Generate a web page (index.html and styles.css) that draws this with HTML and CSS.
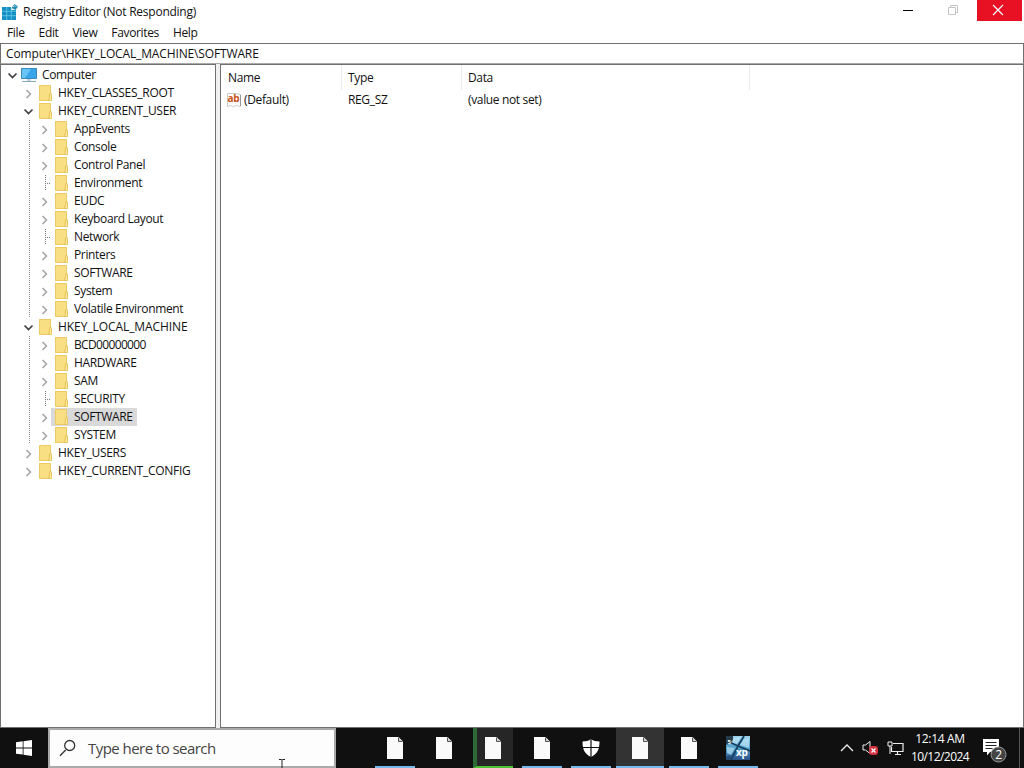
FILE: index.html
```html
<!DOCTYPE html>
<html lang="en">
<head>
    <meta charset="UTF-8">
    <meta name="viewport" content="width=device-width, initial-scale=1.0">
    <title>Registry Editor</title>
    <link rel="stylesheet" href="styles.css">
</head>
<body>
    <!-- shared icons -->
    <svg class="sprite">
        <symbol id="closed" viewBox="0 0 12 12"><path d="M4.500 2l4 4-4 4" fill="none" stroke="#a3a3a3" stroke-width="1.5"/></symbol>
        <symbol id="open" viewBox="0 0 12 12"><path d="M2.500 3.500l4 4 4-4" fill="none" stroke="#404040" stroke-width="1.7"/></symbol>
        <symbol id="branch" viewBox="0 0 12 18"><path d="M7.500 1v16M9 9.500h5" fill="none" stroke="#777" stroke-dasharray="1 1"/></symbol>
        <symbol id="folder" viewBox="0 0 14 16">
            <path d="M1 0h12v8l1 1v6.500H1z" fill="#fae08a"/>
            <path d="M1.500.5h11v7.500l-1.500 7.500H1.500z" fill="#f9df83" stroke="#eccb62"/>
            <path d="M12 8l-1.200 7.500h2.700V9z" fill="#ffeaa0" stroke="#e2bd50" stroke-width=".8"/>
        </symbol>
        <symbol id="file" viewBox="0 0 18 22">
            <path d="M1 0h11.500L17 4.500V22H1z" fill="#fafafa"/>
            <path d="M12.500.5v4h4" fill="#ccc" stroke="#555" stroke-width="1"/>
        </symbol>
    </svg>

    <div class="window">
        <div class="titlebar">
            <svg class="app-icon" viewBox="0 0 16 16">
                <path d="M0 3h9v3h5v10H0z" fill="#168fc2"/>
                <path d="M0 7.300h14M0 11.700h14M4.700 3v13M9.300 4v12" stroke="#6fd2ee" stroke-width=".7"/>
                <path d="M12.500 0l3.500 2.500-2.500 3.500-4-2z" fill="#2386ad"/>
                <path d="M11 3l2-1.500 1.500 1.500" fill="none" stroke="#8fd6e8"/>
            </svg>
            <span class="title">Registry Editor (Not Responding)</span>
            <div class="controls">
                <div class="control"><svg width="12" height="12"><path d="M1 6.500h10" stroke="#000"/></svg></div>
                <div class="control"><svg width="12" height="12"><path d="M1.500 3.500h7v7h-7zM3.500 3V1.500h7v7H9" fill="none" stroke="#c4c4c4"/></svg></div>
                <div class="control close"><svg width="12" height="12"><path d="M1 1l10 10M11 1L1 11" stroke="#fff" stroke-width="1.200"/></svg></div>
            </div>
        </div>
        <div class="menubar">
            <span>File</span><span>Edit</span><span>View</span><span>Favorites</span><span>Help</span>
        </div>
        <div class="address">Computer\HKEY_LOCAL_MACHINE\SOFTWARE</div>

        <div class="panes">
            <div class="tree">
                <div class="row root">
                    <svg class="toggle"><use href="#open"/></svg>
                    <svg class="computer" viewBox="0 0 16 16">
                        <path d="M.5 1.500h15v10H.5z" fill="#38a5e8" stroke="#3989bd"/>
                        <path d="M1 2h9L4 11H1z" fill="#69c5f5"/>
                        <path d="M6 12h4v2H6z" fill="#c5d4df"/>
                        <path d="M1 14.500h14" stroke="#86a8bf"/>
                    </svg>
                    <span>Computer</span>
                </div>
                <ul>
                    <li><div class="row hive"><svg class="toggle"><use href="#closed"/></svg><svg class="folder"><use href="#folder"/></svg><span>HKEY_CLASSES_ROOT</span></div></li>
                    <li>
                        <div class="row hive"><svg class="toggle"><use href="#open"/></svg><svg class="folder"><use href="#folder"/></svg><span>HKEY_CURRENT_USER</span></div>
                        <ul class="keys">
                            <li class="row"><svg class="toggle"><use href="#closed"/></svg><svg class="folder"><use href="#folder"/></svg><span>AppEvents</span></li>
                            <li class="row"><svg class="toggle"><use href="#closed"/></svg><svg class="folder"><use href="#folder"/></svg><span>Console</span></li>
                            <li class="row"><svg class="toggle"><use href="#closed"/></svg><svg class="folder"><use href="#folder"/></svg><span>Control Panel</span></li>
                            <li class="row"><svg class="leaf"><use href="#branch"/></svg><svg class="folder"><use href="#folder"/></svg><span>Environment</span></li>
                            <li class="row"><svg class="toggle"><use href="#closed"/></svg><svg class="folder"><use href="#folder"/></svg><span>EUDC</span></li>
                            <li class="row"><svg class="toggle"><use href="#closed"/></svg><svg class="folder"><use href="#folder"/></svg><span>Keyboard Layout</span></li>
                            <li class="row"><svg class="leaf"><use href="#branch"/></svg><svg class="folder"><use href="#folder"/></svg><span>Network</span></li>
                            <li class="row"><svg class="toggle"><use href="#closed"/></svg><svg class="folder"><use href="#folder"/></svg><span>Printers</span></li>
                            <li class="row"><svg class="toggle"><use href="#closed"/></svg><svg class="folder"><use href="#folder"/></svg><span>SOFTWARE</span></li>
                            <li class="row"><svg class="toggle"><use href="#closed"/></svg><svg class="folder"><use href="#folder"/></svg><span>System</span></li>
                            <li class="row"><svg class="toggle"><use href="#closed"/></svg><svg class="folder"><use href="#folder"/></svg><span>Volatile Environment</span></li>
                        </ul>
                    </li>
                    <li>
                        <div class="row hive machine"><svg class="toggle"><use href="#open"/></svg><svg class="folder"><use href="#folder"/></svg><span>HKEY_LOCAL_MACHINE</span></div>
                        <ul class="keys">
                            <li class="row digits"><svg class="toggle"><use href="#closed"/></svg><svg class="folder"><use href="#folder"/></svg><span>BCD00000000</span></li>
                            <li class="row"><svg class="toggle"><use href="#closed"/></svg><svg class="folder"><use href="#folder"/></svg><span>HARDWARE</span></li>
                            <li class="row"><svg class="toggle"><use href="#closed"/></svg><svg class="folder"><use href="#folder"/></svg><span>SAM</span></li>
                            <li class="row"><svg class="leaf"><use href="#branch"/></svg><svg class="folder"><use href="#folder"/></svg><span>SECURITY</span></li>
                            <li class="row selected"><svg class="toggle"><use href="#closed"/></svg><svg class="folder"><use href="#folder"/></svg><span>SOFTWARE</span></li>
                            <li class="row"><svg class="toggle"><use href="#closed"/></svg><svg class="folder"><use href="#folder"/></svg><span>SYSTEM</span></li>
                        </ul>
                    </li>
                    <li><div class="row hive"><svg class="toggle"><use href="#closed"/></svg><svg class="folder"><use href="#folder"/></svg><span>HKEY_USERS</span></div></li>
                    <li><div class="row hive"><svg class="toggle"><use href="#closed"/></svg><svg class="folder"><use href="#folder"/></svg><span>HKEY_CURRENT_CONFIG</span></div></li>
                </ul>
            </div>
            <div class="values">
                <div class="value-row head"><span class="name">Name</span><span>Type</span><span>Data</span></div>
                <div class="value-row">
                    <span class="value">
                        <svg class="string-icon" viewBox="0 0 16 16">
                            <path d="M1.500 1.500h9l4 1v12l-4-1-3 1-3-1-3 1z" fill="#fff" stroke="#c9c9c9"/>
                            <path d="M14.500 3v11" stroke="#999"/>
                            <text x="1.500" y="10">ab</text>
                        </svg>(Default)</span>
                    <span>REG_SZ</span>
                    <span>(value not set)</span>
                </div>
            </div>
        </div>
    </div>

    <div class="taskbar">
        <div class="start">
            <svg width="16" height="16" viewBox="0 0 16 16"><path d="M0 2.300l6.700-1v6.200H0zM7.500 1.200L16 0v7.500H7.500zM0 8.400h6.700v6.200L0 13.700zM7.500 8.400H16V16l-8.500-1.200z" fill="#fff"/></svg>
        </div>
        <div class="search">
            <svg width="18" height="18" viewBox="0 0 18 18"><path d="M6.700 11L1 16.700" stroke="#333" stroke-width="1.400"/><circle cx="10.700" cy="6.500" r="5" fill="none" stroke="#333" stroke-width="1.300"/></svg>
            <span>Type here to search</span>
            <svg class="cursor" width="8" height="10"><path d="M1 1.500h2.500l.5.5.5-.5H7M4 2v8" fill="none" stroke="#222"/></svg>
        </div>
        <div class="tasks">
            <div class="task running"><svg class="file"><use href="#file"/></svg></div>
            <div class="task"><svg class="file"><use href="#file"/></svg></div>
            <div class="task progress"><svg class="file"><use href="#file"/></svg></div>
            <div class="task running"><svg class="file"><use href="#file"/></svg></div>
            <div class="task running">
                <svg width="18" height="18" viewBox="0 0 18 18"><path d="M9 0c2.500 2 5 2.300 8.500 2.500 0 8-2 12-8.500 15.500C2.500 14.500.5 10.500.5 2.500 4 2.300 6.500 2 9 0z" fill="#fff"/><path d="M9 0v18M0 8.500h18" stroke="#101010" stroke-width="1.200"/></svg>
            </div>
            <div class="task running active"><svg class="file"><use href="#file"/></svg></div>
            <div class="task running"><svg class="file"><use href="#file"/></svg></div>
            <div class="task running">
                <svg class="xp-icon" width="24" height="24" viewBox="0 0 24 24">
                    <defs><linearGradient id="xp" x1="0" y1="0" x2="0" y2="1"><stop offset="0" stop-color="#9fd3ec"/><stop offset=".5" stop-color="#4d9fca"/><stop offset="1" stop-color="#2a5088"/></linearGradient></defs>
                    <path d="M0 0h24v24H0z" fill="url(#xp)"/>
                    <path d="M0 0h7v6l-7 3z" fill="#253b48"/>
                    <path d="M1 5l11 5 12 5M18 0l-6 10L5 24" fill="none" stroke="#173f61" stroke-width="1.800"/>
                    <path d="M8 2l7-1-4 7-6-2zM14 9l4-6 5-1v10zM1 11l8 1-4 7-4-2z" fill="#c4eafa" opacity=".65"/>
                    <path d="M0 21l5-2-1 5H0z" fill="#294a70"/>
                    <text class="five" x="1.500" y="7.500">5</text>
                    <text x="10" y="20">xp</text>
                </svg>
            </div>
        </div>
        <div class="tray">
            <svg width="14" height="8"><path d="M1 7l6-6 6 6" fill="none" stroke="#eee" stroke-width="1.300"/></svg>
            <svg class="volume" width="17" height="16" viewBox="0 0 17 16">
                <path d="M1 5h2.500L8 1.500v12L3.500 10H1z" fill="none" stroke="#eee"/>
                <rect x="7" y="6" width="9" height="9" rx="3" fill="#d23340"/>
                <path d="M9.500 8.500l4 4M13.500 8.500l-4 4" stroke="#fff" stroke-width="1.300"/>
            </svg>
            <svg class="network" width="17" height="15" viewBox="0 0 17 15">
                <path d="M6 2.500h10v8H4.500V6M8 13.500h6M10.500 11v2.500" fill="none" stroke="#eee" stroke-width="1.200"/>
                <path d="M1 1h4v4H1zM3 5v8" fill="none" stroke="#eee"/>
            </svg>
            <div class="clock"><span>12:14 AM</span><span class="date">10/12/2024</span></div>
            <svg class="notice" width="25" height="24" viewBox="0 0 25 24">
                <path d="M1 0h16v13H8l-3 3.500V13H1z" fill="#fff"/>
                <path d="M3.500 3.500h11M3.500 6.500h11M3.500 9.500h7" stroke="#222"/>
                <circle cx="16.500" cy="15.500" r="7.500" fill="#444" stroke="#999"/>
                <text x="13.300" y="20">2</text>
            </svg>
            <div class="show-desktop"></div>
        </div>
    </div>
</body>
</html>
```

FILE: styles.css
```css
* {
    box-sizing: border-box;
}
body {
    margin: 0;
    width: 1024px;
    height: 768px;
    overflow: hidden;
    display: flex;
    flex-direction: column;
    font-family: "Open Sans", "Noto Sans", sans-serif;
    font-size: 12px;
    letter-spacing: -0.35px;
    color: #111;
    background: #fff;
}
svg {
    flex: none;
    display: block;
}
.sprite {
    width: 0;
    height: 0;
    position: absolute;
}
.window {
    height: 728px;
    display: flex;
    flex-direction: column;
}

/* title and menu */
.titlebar {
    height: 24px;
    display: flex;
    align-items: center;
    padding-left: 2px;
}
.app-icon {
    width: 16px;
    height: 16px;
    margin-right: 5px;
}
.title {
    letter-spacing: -0.25px;
    line-height: 22px;
    padding-bottom: 1px;
}
.controls {
    display: flex;
    margin-left: auto;
    align-self: flex-start;
    padding-right: 2px;
}
.control {
    width: 45px;
    height: 21px;
    display: flex;
    align-items: center;
    justify-content: center;
    padding: 0 3px 1px 0;
}
.close {
    background: #e81123;
}
.menubar {
    height: 19px;
    display: flex;
    gap: 14px;
    padding-left: 7px;
    line-height: 18px;
}
.address {
    height: 21px;
    border: 1px solid #707070;
    border-bottom-color: #aaa;
    padding-left: 5px;
    line-height: 20px;
    letter-spacing: -0.14px;
}

/* panes */
.panes {
    flex: 1;
    display: flex;
    gap: 4px;
    background: #f0f0f0;
}
.tree, .values {
    background: #fff;
    border: 1px solid #707070;
}
.tree {
    width: 216px;
    padding-top: 1px;
}
.values {
    flex: 1;
}
ul {
    list-style: none;
    margin: 0;
    padding: 0 0 0 16px;
}
.row {
    height: 18px;
    display: flex;
    align-items: center;
    padding-left: 5px;
    white-space: nowrap;
}
.toggle {
    width: 12px;
    height: 12px;
    margin-top: 2px;
}
.leaf {
    width: 12px;
    height: 18px;
    overflow: visible;
}
.folder {
    width: 14px;
    height: 16px;
    margin: 0 2px 0 4px;
}
.row span {
    padding: 0 4px;
    line-height: 18px;
}
.computer {
    width: 16px;
    height: 16px;
    margin: 0 1px 0 3px;
}
.hive span {
    letter-spacing: -0.28px;
}
.machine span {
    letter-spacing: -0.07px;
}
.digits span {
    letter-spacing: -0.65px;
}
.keys {
    background: repeating-linear-gradient(#888 0 1px, transparent 1px 2px) 12px 0 / 1px 100% no-repeat;
}
.selected .folder, .selected span {
    height: 18px;
    background: #d9d9d9;
}
.selected .folder {
    width: 20px;
    margin: 0 0 0 1px;
    padding: 1px 0;
}
.selected span {
    padding-left: 3px;
}
.value-row {
    height: 22px;
    display: grid;
    grid-template-columns: 121px 120px 288px 1fr;
    line-height: 22px;
}
.value-row span {
    padding-left: 6px;
}
.head {
    height: 24px;
    line-height: 25px;
}
.head span {
    border-right: 1px solid #ececec;
}
.value-row .name {
    padding-left: 7px;
}
.value-row .value {
    display: flex;
    align-items: center;
    padding-left: 5px;
}
.string-icon {
    width: 16px;
    height: 16px;
    margin-right: 2px;
}
.string-icon text {
    font-size: 10px;
    font-weight: bold;
    fill: #c85018;
}

/* taskbar */
.taskbar {
    height: 40px;
    display: flex;
    background: #101010;
    color: #fff;
}
.start {
    width: 48px;
    display: flex;
    align-items: center;
    justify-content: center;
}
.search {
    width: 288px;
    border: 2px solid #aaa;
    background: #fdfdfd;
    color: #444;
    display: flex;
    align-items: center;
    padding-left: 9px;
    font-size: 15px;
    letter-spacing: -0.55px;
}
.search span {
    margin-left: 11px;
}
.cursor {
    margin: auto 48px -2px auto;
}
.tasks {
    display: flex;
    gap: 1px;
    margin-left: 35px;
}
.task {
    width: 48px;
    height: 40px;
    display: flex;
    align-items: center;
    justify-content: center;
    background: linear-gradient(#76b9ed, #76b9ed) center bottom / 0 2px no-repeat;
}
.file {
    width: 18px;
    height: 22px;
}
.running {
    background-size: 40px 2px;
}
.active {
    background-color: #333;
    background-size: 48px 2px;
}
.progress {
    width: 40px;
    margin: 0 4px;
    background: #262626;
    border-left: 4px solid #2c6b35;
    border-bottom: 2px solid #4cc234;
}
.progress .file {
    margin: 2px 4px 0 0;
}
.xp-icon text {
    font-size: 10px;
    font-weight: bold;
    fill: #fff;
}
.xp-icon .five {
    font-size: 6px;
}
.tray {
    display: flex;
    align-items: center;
    margin-left: auto;
}
.volume {
    margin-left: 8px;
}
.network {
    margin-left: 8px;
}
.clock {
    width: 72px;
    display: flex;
    flex-direction: column;
    align-items: center;
    line-height: 18px;
    padding-bottom: 1px;
}
.clock .date {
    letter-spacing: -0.55px;
}
.notice {
    margin: 6px 0 0 6px;
}
.notice text {
    font-size: 12px;
    fill: #fff;
}
.show-desktop {
    width: 5px;
    height: 40px;
    margin-left: 12px;
    border-left: 1px solid #555;
}
```
